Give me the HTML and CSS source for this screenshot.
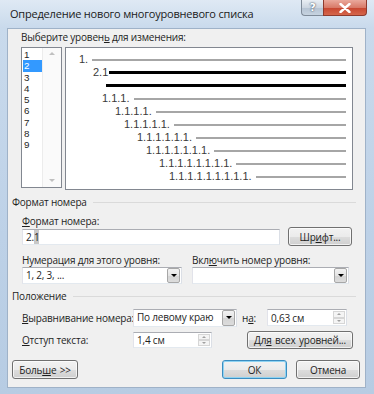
FILE: index.html
```html
<!DOCTYPE html>
<html>
<head>
  <title>Определение нового многоуровневого списка</title>
  <link rel="stylesheet" href="styles.css">
</head>
<body>
  <div class="window">
    <div class="titlebar">
      <span class="title">Определение нового многоуровневого списка</span>
      <div class="caption">
        <span class="cap-btn help">?</span>
        <span class="cap-btn close">
          <svg width="12" height="10" viewBox="0 0 12 10"><path d="M1.5 1 L10.5 9 M10.5 1 L1.5 9" stroke="#fff" stroke-width="2.4" stroke-linecap="round"/></svg>
        </span>
      </div>
    </div>

    <div class="client">
      <div class="lbl top-lbl">Выберите уровен<u>ь</u> для изменения:</div>

      <div class="levels">
        <div class="listbox">
          <div class="items">
            <div class="item">1</div>
            <div class="item selected">2</div>
            <div class="item">3</div>
            <div class="item">4</div>
            <div class="item">5</div>
            <div class="item">6</div>
            <div class="item">7</div>
            <div class="item">8</div>
            <div class="item">9</div>
          </div>
          <div class="scroll">
            <span class="arr up"></span>
            <span class="arr down"></span>
          </div>
        </div>

        <div class="preview">
          <div class="prow l1"><span>1.</span><i class="ln"></i></div>
          <div class="prow l2"><span>2.1</span><i class="ln bold"></i></div>
          <div class="prow l2b"><i class="ln bold"></i></div>
          <div class="prow l3"><span>1.1.1.</span><i class="ln"></i></div>
          <div class="prow l4"><span>1.1.1.1.</span><i class="ln"></i></div>
          <div class="prow l5"><span>1.1.1.1.1.</span><i class="ln"></i></div>
          <div class="prow l6"><span>1.1.1.1.1.1.</span><i class="ln"></i></div>
          <div class="prow l7"><span>1.1.1.1.1.1.1.</span><i class="ln"></i></div>
          <div class="prow l8"><span>1.1.1.1.1.1.1.1.</span><i class="ln"></i></div>
          <div class="prow l9"><span>1.1.1.1.1.1.1.1.1.</span><i class="ln"></i></div>
        </div>
      </div>

      <div class="group-head first"><span>Формат номера</span><i class="sep"></i></div>

      <div class="lbl fmt-lbl"><u>Ф</u>ормат номера:</div>
      <div class="row fmt-row">
        <div class="textbox fmt-box">2.<span class="sel">1</span></div>
        <div class="btn font-btn">Шр<u>и</u>фт...</div>
      </div>

      <div class="row fields">
        <div class="field f1">
          <div class="lbl">Нумерация для этого уровня:</div>
          <div class="combo"><span class="val">1, 2, 3, ...</span><span class="drop"></span></div>
        </div>
        <div class="field f2">
          <div class="lbl">Вкл<u>ю</u>чить номер уровня:</div>
          <div class="combo"><span class="val"></span><span class="drop"></span></div>
        </div>
      </div>

      <div class="group-head second"><span>Положение</span><i class="sep"></i></div>

      <div class="row align-row">
        <div class="lbl wide"><u>В</u>ыравнивание номера:</div>
        <div class="combo align-combo"><span class="val">По левому краю</span><span class="drop"></span></div>
        <div class="lbl on-lbl">н<u>а</u>:</div>
        <div class="textbox spin on-spin"><span class="val">0,63 см</span><span class="spins"><i class="s-up"></i><i class="s-down"></i></span></div>
      </div>

      <div class="row indent-row">
        <div class="lbl wide"><u>О</u>тступ текста:</div>
        <div class="textbox spin indent-spin"><span class="val">1,4 см</span><span class="spins"><i class="s-up"></i><i class="s-down"></i></span></div>
        <div class="btn all-btn">Дл<u>я</u>&nbsp;всех уровней...</div>
      </div>

      <div class="row bottom-row">
        <div class="btn more-btn">Боль<u>ш</u>е &gt;&gt;</div>
        <div class="btn ok-btn">ОК</div>
        <div class="btn cancel-btn">Отмена</div>
      </div>
    </div>
  </div>
</body>
</html>
```

FILE: styles.css
```css
body {
  margin: 0;
  padding: 0;
  font-family: "Open Sans", "Noto Sans", sans-serif;
  font-size: 10px;
  letter-spacing: -0.2px;
  color: #1e1e1e;
}

u {
  text-decoration-thickness: 1px;
  text-underline-offset: 1px;
}

.window {
  width: 374px;
  height: 394px;
  box-sizing: border-box;
  background: linear-gradient(to bottom, #dfe9f4, #c9daec 28px, #bdd1e7 60%, #b7cce3);
  display: flex;
  flex-direction: column;
}

/* title bar */
.titlebar {
  height: 28px;
  display: flex;
  align-items: flex-start;
}

.title {
  margin: 6px 0 0 10px;
  font-size: 11px;
  letter-spacing: -0.2px;
  line-height: 15px;
  color: #1a1a1a;
}

.caption {
  margin-left: auto;
  margin-right: 7px;
  display: flex;
}

.cap-btn {
  height: 16px;
  box-sizing: border-box;
  display: flex;
  align-items: center;
  justify-content: center;
  border: 1px solid #7f8b99;
  border-top: none;
}

.help {
  width: 22px;
  border-radius: 0 0 0 4px;
  border-right: none;
  background: linear-gradient(to bottom, #e9eef4, #cdd6e1 50%, #b5c3d3 51%, #c7d3e0);
  color: #fff;
  font-family: "DejaVu Sans", sans-serif;
  font-weight: bold;
  font-size: 11px;
  text-shadow: 0 0 2px #4b5a6b, 0 0 1px #4b5a6b;
}

.close {
  width: 44px;
  border-radius: 0 0 4px 0;
  border-color: #8e3a2d;
  background: linear-gradient(to bottom, #eaa99c, #d87a68 50%, #c7452f 51%, #d5664b);
}

/* client area */
.client {
  margin: 0 8px 0 7px;
  height: 360px;
  box-sizing: border-box;
  border: 1px solid #9fb2c8;
  background: #f0f0f0;
  display: flex;
  flex-direction: column;
}

.lbl {
  line-height: 14px;
  height: 14px;
  white-space: nowrap;
}

.top-lbl {
  margin: 1px 0 0 13px;
}

.levels {
  margin: 3px 0 0 13px;
  display: flex;
  align-items: flex-start;
}

.listbox {
  width: 41px;
  height: 141px;
  box-sizing: border-box;
  border: 1px solid #828790;
  background: #fff;
  display: flex;
}

.items {
  width: 20px;
  padding-top: 1px;
}

.item {
  height: 11.3px;
  line-height: 11.3px;
  padding-left: 2px;
  font-family: "Liberation Sans", Arial, sans-serif;
  font-size: 9.8px;
  letter-spacing: 0;
}

.item.selected {
  margin-left: 1px;
  padding-left: 1px;
  background: #3399ff;
  color: #fff;
}

.scroll {
  flex: 1;
  border-left: 1px solid #ececec;
  background: #fafafa;
  display: flex;
  flex-direction: column;
  justify-content: space-between;
  align-items: center;
  padding: 4px 0 5px;
}

.arr {
  width: 0;
  height: 0;
  border-left: 3px solid transparent;
  border-right: 3px solid transparent;
}

.arr.up {
  border-bottom: 3px solid #c0c0c0;
}

.arr.down {
  border-top: 3px solid #c0c0c0;
}

.preview {
  margin-left: 3px;
  width: 288px;
  height: 143px;
  box-sizing: border-box;
  border: 1px solid #828790;
  background: #fff;
  padding: 5px 6px 0 0;
  font-family: "Liberation Sans", Arial, sans-serif;
  font-size: 11px;
  letter-spacing: 0;
  color: #3a3a3a;
}

.prow {
  height: 13px;
  line-height: 13px;
  display: flex;
  align-items: center;
  white-space: nowrap;
}

.ln {
  flex: 1;
  height: 2px;
  margin-left: 4px;
  background: #a6a6a6;
}

.ln.bold {
  height: 3px;
  background: #000;
}

.l1 { padding-left: 13px; }
.l2 { padding-left: 27px; }
.l2 .ln { margin-left: 1px; }
.l2b { padding-left: 36px; }
.l3 { padding-left: 36px; }
.l4 { padding-left: 49px; }
.l5 { padding-left: 58px; }
.l6 { padding-left: 71px; }
.l7 { padding-left: 80px; }
.l8 { padding-left: 93px; }
.l9 { padding-left: 103px; }

.group-head {
  margin: 5px 0 0 4px;
  height: 14px;
  line-height: 14px;
  display: flex;
  align-items: center;
}

.group-head .sep {
  flex: 1;
  height: 1px;
  margin: 0 9px 0 6px;
  background: #dadada;
}

.fmt-lbl {
  margin: 6px 0 0 14px;
  height: 12px;
  line-height: 12px;
}

.row {
  display: flex;
  align-items: center;
  margin-left: 14px;
}

.textbox {
  box-sizing: border-box;
  border: 1px solid #abadb3;
  border-color: #abadb3 #dbdfe6 #e3e9ef #e2e3ea;
  background: #fff;
  display: flex;
  align-items: center;
  padding-left: 3px;
}

.fmt-row {
  height: 19px;
}

.fmt-box {
  width: 258px;
  height: 16px;
}

.fmt-box .sel {
  background: #c8c8c8;
}

.btn {
  box-sizing: border-box;
  border: 1px solid #707070;
  border-radius: 3px;
  background: linear-gradient(to bottom, #f2f2f2, #ebebeb 50%, #dddddd 51%, #cfcfcf);
  box-shadow: inset 0 0 0 1px rgba(255, 255, 255, 0.7);
  display: flex;
  align-items: center;
  justify-content: center;
  white-space: nowrap;
  word-spacing: 1px;
}

.font-btn {
  margin-left: 8px;
  width: 64px;
  height: 19px;
}

.fields {
  align-items: flex-start;
}

.field .lbl {
  margin-top: 7px;
}

.f1 {
  width: 160px;
}

.f2 {
  margin-left: 10px;
  width: 157px;
}

.combo {
  height: 17px;
  box-sizing: border-box;
  border: 1px solid #abadb3;
  border-color: #abadb3 #dbdfe6 #e3e9ef #e2e3ea;
  background: #fff;
  display: flex;
  align-items: stretch;
}

.combo .val {
  flex: 1;
  padding-left: 3px;
  line-height: 15px;
  white-space: nowrap;
  overflow: hidden;
}

.combo .drop {
  width: 13px;
  margin: 0 1px 0 0;
  box-sizing: border-box;
  border: 1px solid #a7a7a7;
  border-radius: 2px;
  background: linear-gradient(to bottom, #f2f2f2, #e4e4e4 50%, #d4d4d4 51%, #dcdcdc);
  display: flex;
  align-items: center;
  justify-content: center;
}

.combo .drop::after {
  content: "";
  border-left: 3px solid transparent;
  border-right: 3px solid transparent;
  border-top: 3px solid #000;
}

.second {
  margin-top: 5px;
}

.align-row {
  margin-top: 5px;
  height: 19px;
}

.wide {
  width: 111px;
}

.align-combo {
  width: 104px;
  height: 18px;
}

.on-lbl {
  margin-left: 5px;
  width: 25px;
}

.spin {
  justify-content: space-between;
  padding-right: 1px;
}

.spins {
  width: 12px;
  align-self: stretch;
  display: flex;
  flex-direction: column;
  padding: 1px 0;
}

.spins i {
  flex: 1;
  border: 1px solid #d6d6d6;
  background: #f4f4f4;
  display: flex;
  align-items: center;
  justify-content: center;
}

.spins i::after {
  content: "";
  border-left: 2px solid transparent;
  border-right: 2px solid transparent;
}

.s-up::after {
  border-bottom: 2px solid #a0a0a0;
}

.s-down::after {
  border-top: 2px solid #a0a0a0;
}

.on-spin {
  width: 80px;
  height: 17px;
}

.indent-row {
  margin-top: 4px;
  height: 18px;
}

.indent-spin {
  width: 79px;
  height: 16px;
}

.all-btn {
  margin-left: 35px;
  width: 106px;
  height: 18px;
}

.bottom-row {
  margin: 11px 0 0 4px;
  height: 19px;
}

.more-btn {
  width: 66px;
  height: 19px;
}

.ok-btn {
  margin-left: auto;
  width: 65px;
  height: 19px;
  border-color: #3a8dc1;
  box-shadow: inset 0 0 0 1px #8fd3f2;
}

.cancel-btn {
  margin: 0 5px 0 9px;
  width: 64px;
  height: 19px;
}
```
